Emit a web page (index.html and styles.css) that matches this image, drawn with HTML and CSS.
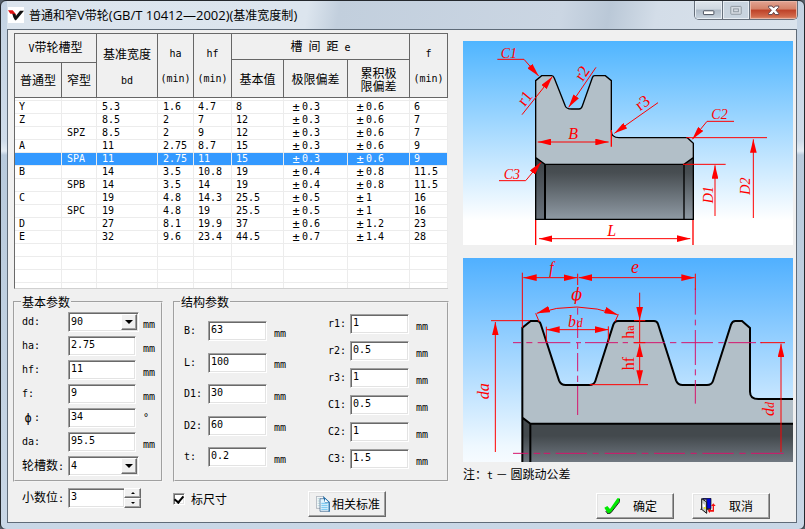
FILE: index.html
```html
<!DOCTYPE html>
<html lang="zh-CN">
<head>
<meta charset="utf-8">
<title>普通和窄V带轮(GB/T 10412—2002)(基准宽度制)</title>
<link rel="stylesheet" href="styles.css">
</head>
<body>
<div class="window">
  <header class="titlebar">
    <svg class="app-icon" viewBox="0 0 48 48" aria-hidden="true"><rect width="48" height="48" fill="#fff"/><path d="M0 10h14l10 12-5 8-6-10H7z" fill="#e01010"/><path d="M13 20h8l3 6L36 11h12L30 33l-6 7h-3l-5-9z" fill="#111"/></svg>
    <h1>普通和窄<span>V</span>带轮<span>(GB/T 10412—2002)(</span>基准宽度制<span>)</span></h1>
    <div class="caption-buttons">
      <button class="cap min" type="button" aria-label="最小化"><svg viewBox="0 0 84 57"><rect x="26" y="31" width="33" height="12" rx="2" fill="#fff" stroke="#454b59" stroke-width="3"/></svg></button>
      <button class="cap max" type="button" aria-label="最大化" disabled><svg viewBox="0 0 81 57"><rect x="24" y="17" width="33" height="25" rx="2" fill="#d5dbe2" stroke="#8d969f" stroke-width="3"/><rect x="33" y="25" width="15" height="9" fill="none" stroke="#8d969f" stroke-width="3"/></svg></button>
      <button class="cap close" type="button" aria-label="关闭"><svg viewBox="0 0 141 57"><path d="M55 16h11l5 6 5-6h11v4l-9 9 9 10v4H76l-5-7-5 7H55v-4l9-10-9-9z" fill="#fff" stroke="#5b3f48" stroke-width="3"/></svg></button>
    </div>
  </header>

  <main class="client">
    <section class="left">
      <div class="list">
        <table>
          <colgroup><col class="c1"><col class="c2"><col class="c3"><col class="c4"><col class="c5"><col class="c6"><col class="c7"><col class="c8"><col class="c9"></colgroup>
          <thead>
            <tr class="h1"><th colspan="2" rowspan="2"><span class="lat">V</span>带轮槽型</th><th rowspan="3" class="two">基准宽度<br><span class="lat">bd</span></th><th rowspan="3" class="two lat">ha<br>(min)</th><th rowspan="3" class="two lat">hf<br>(min)</th><th colspan="3">槽&ensp;间&ensp;距&ensp;<span class="lat">e</span></th><th rowspan="3" class="two lat">f<br>(min)</th></tr>
            <tr class="h2"><th rowspan="2">基本值</th><th rowspan="2">极限偏差</th><th rowspan="2" class="tight">累积极<br>限偏差</th></tr>
            <tr class="h3"><th>普通型</th><th>窄型</th></tr>
          </thead>
          <tbody>
            <tr class="pad"><td></td><td></td><td></td><td></td><td></td><td></td><td></td><td></td><td></td></tr>
            <tr><td>Y</td><td></td><td>5.3</td><td>1.6</td><td>4.7</td><td>8</td><td><i>±</i>0.3</td><td><i>±</i>0.6</td><td>6</td></tr>
            <tr><td>Z</td><td></td><td>8.5</td><td>2</td><td>7</td><td>12</td><td><i>±</i>0.3</td><td><i>±</i>0.6</td><td>7</td></tr>
            <tr><td></td><td>SPZ</td><td>8.5</td><td>2</td><td>9</td><td>12</td><td><i>±</i>0.3</td><td><i>±</i>0.6</td><td>7</td></tr>
            <tr><td>A</td><td></td><td>11</td><td>2.75</td><td>8.7</td><td>15</td><td><i>±</i>0.3</td><td><i>±</i>0.6</td><td>9</td></tr>
            <tr class="selected"><td></td><td>SPA</td><td>11</td><td>2.75</td><td>11</td><td>15</td><td><i>±</i>0.3</td><td><i>±</i>0.6</td><td>9</td></tr>
            <tr><td>B</td><td></td><td>14</td><td>3.5</td><td>10.8</td><td>19</td><td><i>±</i>0.4</td><td><i>±</i>0.8</td><td>11.5</td></tr>
            <tr><td></td><td>SPB</td><td>14</td><td>3.5</td><td>14</td><td>19</td><td><i>±</i>0.4</td><td><i>±</i>0.8</td><td>11.5</td></tr>
            <tr><td>C</td><td></td><td>19</td><td>4.8</td><td>14.3</td><td>25.5</td><td><i>±</i>0.5</td><td><i>±</i>1</td><td>16</td></tr>
            <tr><td></td><td>SPC</td><td>19</td><td>4.8</td><td>19</td><td>25.5</td><td><i>±</i>0.5</td><td><i>±</i>1</td><td>16</td></tr>
            <tr><td>D</td><td></td><td>27</td><td>8.1</td><td>19.9</td><td>37</td><td><i>±</i>0.6</td><td><i>±</i>1.2</td><td>23</td></tr>
            <tr><td>E</td><td></td><td>32</td><td>9.6</td><td>23.4</td><td>44.5</td><td><i>±</i>0.7</td><td><i>±</i>1.4</td><td>28</td></tr>
            <tr><td></td><td></td><td></td><td></td><td></td><td></td><td></td><td></td><td></td></tr>
            <tr><td></td><td></td><td></td><td></td><td></td><td></td><td></td><td></td><td></td></tr>
            <tr><td></td><td></td><td></td><td></td><td></td><td></td><td></td><td></td><td></td></tr>
            <tr class="last"><td></td><td></td><td></td><td></td><td></td><td></td><td></td><td></td><td></td></tr>
          </tbody>
        </table>
      </div>

      <div class="groups">
        <fieldset class="basic">
          <legend>基本参数</legend>
          <div class="field"><label for="dd">dd:</label><span class="combo"><select id="dd"><option>90</option></select><span class="arrow"></span></span><span class="unit">mm</span></div>
          <div class="field"><label for="ha">ha:</label><input id="ha" value="2.75"><span class="unit">mm</span></div>
          <div class="field"><label for="hf">hf:</label><input id="hf" value="11"><span class="unit">mm</span></div>
          <div class="field"><label for="f">f:</label><input id="f" value="9"><span class="unit">mm</span></div>
          <div class="field"><label for="phi"><i>ϕ</i>:</label><input id="phi" value="34"><span class="unit deg">°</span></div>
          <div class="field"><label for="da">da:</label><input id="da" value="95.5"><span class="unit">mm</span></div>
          <div class="field"><label for="slots"><span class="cjk">轮槽数</span>:</label><span class="combo"><select id="slots"><option>4</option></select><span class="arrow"></span></span></div>
        </fieldset>
        <fieldset class="struct">
          <legend>结构参数</legend>
          <div class="col a">
            <div class="field"><label for="B">B:</label><input id="B" value="63"><span class="unit">mm</span></div>
            <div class="field"><label for="L">L:</label><input id="L" value="100"><span class="unit">mm</span></div>
            <div class="field"><label for="D1">D1:</label><input id="D1" value="30"><span class="unit">mm</span></div>
            <div class="field"><label for="D2">D2:</label><input id="D2" value="60"><span class="unit">mm</span></div>
            <div class="field"><label for="t">t:</label><input id="t" value="0.2"><span class="unit">mm</span></div>
          </div>
          <div class="col b">
            <div class="field"><label for="r1">r1:</label><input id="r1" value="1"><span class="unit">mm</span></div>
            <div class="field"><label for="r2">r2:</label><input id="r2" value="0.5"><span class="unit">mm</span></div>
            <div class="field"><label for="r3">r3:</label><input id="r3" value="1"><span class="unit">mm</span></div>
            <div class="field"><label for="C1">C1:</label><input id="C1" value="0.5"><span class="unit">mm</span></div>
            <div class="field"><label for="C2">C2:</label><input id="C2" value="1"><span class="unit">mm</span></div>
            <div class="field"><label for="C3">C3:</label><input id="C3" value="1.5"><span class="unit">mm</span></div>
          </div>
        </fieldset>
      </div>

      <div class="footer">
        <div class="field digits"><label for="digits"><span class="cjk">小数位</span>:</label><input id="digits" value="3"><span class="spin"><button type="button" aria-label="增加"><span class="up"></span></button><button type="button" aria-label="减少"><span class="down"></span></button></span></div>
        <label class="check"><input type="checkbox" checked>标尺寸</label>
        <button class="btn std" type="button"><svg viewBox="0 0 42 48" aria-hidden="true"><path d="M1 1h22v36H1z" fill="#f4f7fa" stroke="#8c96a0" stroke-width="2"/><path d="M5 8h8M5 15h6M5 22h6M5 29h6" stroke="#9cc" stroke-width="2"/><path d="M12 8h17l11 11v27H12z" fill="#e2f3fd" stroke="#3a5f86" stroke-width="2"/><path d="M21 0l20 18v29h-3V20H27z" fill="#1769a8"/><path d="M27 8v11h11z" fill="#fff"/><path d="M16 22h19M16 28h19M16 34h19M16 40h19" stroke="#6fc3ef" stroke-width="3"/></svg>相关标准</button>
      </div>
    </section>

    <section class="right">
      <svg class="drawing" viewBox="24 123 990 612" role="img" aria-label="V带轮结构图">
        <defs>
          <linearGradient id="sky1" x1="0" y1="0" x2="0" y2="1"><stop offset="0" stop-color="#4fb5ff"/><stop offset=".88" stop-color="#fff"/></linearGradient>
          <linearGradient id="bore1" x1="0" y1="0" x2="0" y2="1"><stop offset="0" stop-color="#41464a"/><stop offset=".25" stop-color="#484e52"/><stop offset="1" stop-color="#8f9aa4"/></linearGradient>
          <linearGradient id="edge1" x1="0" y1="0" x2="0" y2="1"><stop offset="0" stop-color="#3a3f43"/><stop offset="1" stop-color="#69727c"/></linearGradient>
          <marker id="tip" viewBox="0 0 40 20" refX="40" refY="10" markerWidth="40" markerHeight="20" markerUnits="userSpaceOnUse" orient="auto-start-reverse"><path d="M0 0L40 10L0 20z" fill="#f00"/></marker>
        </defs>
        <path d="M24 123h990v612H24z" fill="url(#sky1)"/>
        <path d="M242 658V242L260 227H290Q295 227 298 235L330 316Q333 327 350 327H372Q379 327 382 318L412 233Q414 227 419 227H451L469 242V393Q469 413 492 413H697L715 430V658z" fill="#b2bfc8"/>
        <path d="M242 473L270 493H687L715 473V658H242z" fill="url(#bore1)"/>
        <path d="M242 473L270 493V658H242z" fill="url(#edge1)"/>
        <path d="M715 473L687 493V658H715z" fill="url(#bore1)"/>
        <path d="M242 658V242L260 227H290Q295 227 298 235L330 316Q333 327 350 327H372Q379 327 382 318L412 233Q414 227 419 227H451L469 242V393Q469 413 492 413H697L715 430V658zM242 473L270 493H687L715 473M687 493V658" fill="none" stroke="#000" stroke-width="4"/>
        <path d="M270 493V658" stroke="#000" stroke-width="6"/>
        <g fill="none" stroke="#f00" stroke-width="3">
          <path d="M127 178H207L251 228" marker-end="url(#tip)"/>
          <path d="M201 344L292 230" marker-end="url(#tip)"/>
          <path d="M423 202L341 322" marker-end="url(#tip)"/>
          <path d="M609 308L478 400" marker-end="url(#tip)"/>
          <path d="M837 364H756L712 418" marker-end="url(#tip)"/>
          <path d="M132 542H212L258 487" marker-end="url(#tip)"/>
          <path d="M248 426H461" marker-start="url(#tip)" marker-end="url(#tip)"/>
          <path d="M252 716H706" marker-start="url(#tip)" marker-end="url(#tip)"/>
          <path d="M780 648V496" marker-end="url(#tip)"/>
          <path d="M895 654V418" marker-end="url(#tip)"/>
          <path d="M469 390V440M242 660V735M714 660V735" stroke-width="4"/>
          <path d="M694 413H936M684 493H812"/>
        </g>
        <g class="dim">
          <text x="137" y="174">C1</text><text x="769" y="358">C2</text><text x="146" y="537">C3</text>
          <text class="big" x="340" y="416">B</text><text class="big" x="457" y="709">L</text>
          <text transform="translate(773 610) rotate(-90)">D1</text><text transform="translate(886 584) rotate(-90)">D2</text>
          <g class="radius"><text transform="translate(209 321) rotate(-51)">r1</text><text transform="translate(383 246) rotate(-55)">r2</text><text transform="translate(555 334) rotate(-36)">r3</text></g>
        </g>
      </svg>

      <svg class="drawing" viewBox="24 24 990 612" role="img" aria-label="轮槽尺寸图">
        <defs>
          <linearGradient id="sky2" x1="0" y1="0" x2="0" y2="1"><stop offset="0" stop-color="#50b0ff"/><stop offset=".92" stop-color="#eef8ff"/><stop offset="1" stop-color="#f6fbff"/></linearGradient>
          <linearGradient id="bore2" x1="0" y1="0" x2="0" y2="1"><stop offset="0" stop-color="#43494d"/><stop offset=".4" stop-color="#43494d"/><stop offset="1" stop-color="#727a83"/></linearGradient>
        </defs>
        <path d="M24 24h990v612H24z" fill="url(#sky2)"/>
        <path d="M202 640V233L227 213H246Q254 213 257 222L312 391Q317 405 332 405H403Q417 405 421 393L475 224Q479 213 489 213H597Q606 213 609 222L663 391Q668 405 683 405H756Q770 405 774 393L828 224Q832 213 841 213H861L885 234V425Q885 447 910 447H1020V640z" fill="#b2bfc8"/>
        <path d="M202 503L228 521H1020V640H202z" fill="url(#bore2)"/>
        <path d="M202 640V233L227 213H246Q254 213 257 222L312 391Q317 405 332 405H403Q417 405 421 393L475 224Q479 213 489 213H597Q606 213 609 222L663 391Q668 405 683 405H756Q770 405 774 393L828 224Q832 213 841 213H861L885 234V425Q885 447 910 447H1020M202 503L226 521V640M226 521H1020" fill="none" stroke="#000" stroke-width="6"/>
        <g fill="none" stroke="#d5156c" stroke-width="3">
          <path d="M174 278H198M214 278H232M248 278H346M363 278H378M390 278H489M503 278H519M535 278H630M645 278H664M679 278H774M790 278H806M820 278H903M915 278H920"/>
          <path d="M174 610H220M236 610H256M266 610H286M302 610H396M413 610H431M449 610H544M560 610H580M597 610H690M707 610H725M742 610H836M853 610H872M888 610H986"/>
          <path d="M368 174V194M368 210V264M368 278V297M368 309V364M368 377V396M368 408V495"/>
          <path d="M721 115V194M721 209V226M721 240V345M721 358V376M721 390V461"/>
        </g>
        <g fill="none" stroke="#f00" stroke-width="3">
          <path d="M202 68V233M368 71V105M721 71V120"/>
          <path d="M205 83H366" marker-start="url(#tip)" marker-end="url(#tip)"/>
          <path d="M371 83H719" marker-start="url(#tip)" marker-end="url(#tip)"/>
          <path d="M245 190Q365 150 488 194" marker-start="url(#tip)" marker-end="url(#tip)"/>
          <path d="M274 239H460" marker-start="url(#tip)" marker-end="url(#tip)"/>
          <path d="M242 190L253 216M490 193L480 215M274 230V277M460 229V275"/>
          <path d="M108 212H225M537 212H571M537 278H571M404 404H579M918 278H990"/>
          <path d="M121 606V216" marker-end="url(#tip)"/>
          <path d="M978 606V281" marker-end="url(#tip)"/>
          <path d="M554 128V211" marker-end="url(#tip)"/>
          <path d="M554 212V278"/>
          <path d="M554 281V401" marker-start="url(#tip)" marker-end="url(#tip)"/>
        </g>
        <g class="dim">
          <text class="big" x="283" y="68">f</text><text class="huge" x="528" y="69">e</text>
          <text class="phi" x="349" y="149">ϕ</text>
          <text class="big" x="339" y="231">b<tspan class="small" dx="2">d</tspan></text>
          <text class="big" transform="translate(101 448) rotate(-90)">da</text>
          <text class="big" transform="translate(957 498) rotate(-90)">d<tspan class="small">d</tspan></text>
          <text class="big upright" transform="translate(537 266) rotate(-90)">h<tspan class="small">a</tspan></text>
          <text class="big upright" transform="translate(536 361) rotate(-90)">hf</text>
        </g>
      </svg>
      <p class="note">注：<span class="lat">t</span> － 圆跳动公差</p>
      <div class="actions">
        <button class="btn" type="button"><svg viewBox="0 0 48 48" aria-hidden="true"><path d="M1 29l9-5 8 9L40 1h7v9L21 44l-9 4z" fill="#00e800"/><path d="M47 3v8L21 44l-9 4-7-9" fill="none" stroke="#222" stroke-width="3"/></svg><span>确定</span></button>
        <button class="btn" type="button"><svg viewBox="0 0 48 48" aria-hidden="true"><path d="M8 1h25v31H20V4H8z" fill="#0008e0" stroke="#000" stroke-width="2"/><path d="M5 2l15 10v34L5 34z" fill="#c4c8c8" stroke="#111" stroke-width="3"/><path d="M8 16l7 5v10l-7-5z" fill="#fff"/><path d="M12 27h5v5h-5z" fill="#ee0"/><path d="M1 34h5M21 34h12" stroke="#222" stroke-width="3"/><path d="M30 32l-7 6 7 7v-4h12V24h5l-7-8-7 8h5v12h-8z" fill="#f01010"/></svg><span>取消</span></button>
      </div>
    </section>
  </main>
</div>
</body>
</html>
```
FILE: styles.css
```css
* { box-sizing: border-box; }

body {
  margin: 0;
  background: #56606a;
  color: #000;
  font: 12px/12px "Noto Sans CJK SC", sans-serif;
}

button, input, select { font: inherit; color: inherit; margin: 0; }

.lat, .field, td {
  font-family: "DejaVu Sans Mono", "Noto Sans CJK SC", monospace;
  font-size: 10px;
}

.cjk { font: 12px/12px "Noto Sans CJK SC", sans-serif; }

.window {
  display: flex;
  flex-direction: column;
  min-height: 100vh;
  padding: 0 7px 6px 6px;
  border: 1px solid #24282d;
  border-radius: 6px;
  background: linear-gradient(#c3d2e2 0, #cfdcea 140px, #e3ebf3 150px, #b8cadc 154px, #c9d7e6 100%);
}

.titlebar {
  display: flex;
  align-items: flex-start;
  height: 28px;
  background: linear-gradient(100deg, #dbe4ed 0, #dce5ee 38%, #c2cfdd 42%, #cbd6e3 70%, #bac8d7 76%, #d3dde8 82%, #dae3ec 100%);
}

.app-icon { width: 16px; height: 16px; margin: 6px 5px 0 1px; }

.titlebar h1 {
  flex: 1;
  margin: 6px 0 0;
  font: 12px/16px "Open Sans", "Noto Sans CJK SC", sans-serif;
}
.titlebar h1 span { font-size: 13px; }

.caption-buttons {
  display: flex;
  margin-right: -1px;
  border: 1px solid #666f7b;
  border-top: 0;
  border-radius: 0 0 5px 5px;
  overflow: hidden;
}

.cap {
  width: 28px;
  height: 18px;
  padding: 0;
  border: 0;
  border-right: 1px solid #66707c;
  background: linear-gradient(#dfe6ed 0, #ced7e0 45%, #adb9c6 50%, #c9d4df 100%);
  box-shadow: inset 0 0 0 1px #e8eef4;
}
.cap svg { display: block; width: 100%; height: 18px; }
.cap.max { width: 27px; background: #c9d4df; }
.cap.close {
  width: 47px;
  border-right: 0;
  background: linear-gradient(#e2a493 0, #d48168 45%, #bd4128 50%, #d1684a 85%, #dd9275 100%);
  box-shadow: inset 0 0 0 1px #e9b5a5;
}

.client {
  flex: 1;
  display: grid;
  grid-template-columns: minmax(0, 436fr) minmax(0, 330fr);
  gap: 14px;
  padding: 3px 3px 3px 5px;
  border: 1px solid #5f6b78;
  background: #f0f0f0;
}

/* data list */
.list {
  height: 256px;
  margin: 0 1px;
  overflow: hidden;
  border: 1px solid #696969;
  border-right: 0;
  border-bottom-color: #d0d0d0;
  background: #fff;
}

table { width: 100%; table-layout: fixed; border-spacing: 0; }
.c1 { width: 47px; }
.c2 { width: 35px; }
.c3 { width: 61px; }
.c4 { width: 36px; }
.c5 { width: 38px; }
.c6 { width: 52px; }
.c7 { width: 64px; }
.c8 { width: 62px; }
.c9 { width: 38px; }

th {
  padding: 0;
  border-right: 1px solid #666;
  border-bottom: 1px solid #666;
  background: #f0f0f0;
  font-weight: normal;
  line-height: 12px;
  white-space: nowrap;
}
.h1 { height: 26px; }
.h2 { height: 3px; }
.h3 { height: 35px; }
th.two { line-height: 25px; }
th.tight { line-height: 13px; }
.two .lat { line-height: 12px; }

td {
  height: 13px;
  padding: 0 0 0 4px;
  border-right: 1px solid #ececec;
  border-bottom: 1px solid #ececec;
  line-height: 12px;
  white-space: nowrap;
}
.pad td { height: 3px; }
.last td { height: 20px; }
td:nth-child(2), td:nth-child(3), td:nth-child(4) { padding-left: 5px; }
td:nth-child(7), td:nth-child(8) { padding-left: 6px; }
.selected td { background: #3399ff; color: #fff; }

i {
  display: inline-block;
  width: 12px;
  height: 12px;
  vertical-align: top;
  font-style: normal;
  font-size: 12px;
  line-height: 12px;
  text-align: center;
}

/* parameter groups */
.groups { display: grid; grid-template-columns: 150fr 276fr; gap: 10px; margin-top: 7px; }

fieldset {
  display: flex;
  min-width: 0;
  height: 186px;
  margin: 0;
  border: 2px groove #f4f4f4;
}
fieldset.basic { flex-direction: column; gap: 4px; padding: 4px 3px 4px 7px; }
fieldset.struct { padding: 0 19px 0 9px; justify-content: space-between; }
legend { margin-left: -1px; padding: 0 1px; }
.struct legend { margin-left: -4px; }

.col { display: flex; flex-direction: column; justify-content: space-between; }
.col.a { padding: 13px 0; }
.col.b { padding: 6px 0 11px; }

.field { display: flex; align-items: center; height: 20px; line-height: 12px; }
.field > label { width: 46px; white-space: nowrap; }
.col.a label { width: 24px; }
.col.b label { width: 22px; }

.field > input, .combo {
  width: 68px;
  height: 20px;
  padding: 0 0 3px 2px;
  border: 1px solid;
  border-color: #a0a0a0 #fff #fff #a0a0a0;
  border-radius: 0;
  background: #fff;
  box-shadow: inset 1px 1px #696969, inset -1px -1px #e3e3e3;
}
.col .field > input { width: 59px; }
.unit { margin-left: 7px; padding-top: 5px; }
.deg { padding: 0; }

.basic .combo { position: relative; display: block; width: 71px; padding: 1px; }
.combo + .unit { margin-left: 4px; }
.combo select {
  display: block;
  width: 100%;
  height: 16px;
  padding: 0 0 0 1px;
  border: 0;
  background: transparent;
  appearance: none;
}
.arrow {
  position: absolute;
  top: 1px;
  right: 1px;
  width: 16px;
  height: 16px;
  border: 1px solid;
  border-color: #fff #696969 #696969 #fff;
  background: #f0f0f0;
  box-shadow: inset -1px -1px #a0a0a0;
  pointer-events: none;
}
.arrow::after, .up, .down {
  content: "";
  display: block;
  width: 0;
  margin: 5px auto 0;
  border: 4px solid transparent;
  border-top-color: #000;
  border-bottom: 0;
}

.footer { display: flex; align-items: flex-start; margin-top: 6px; }
.digits { width: 160px; padding-left: 9px; }
.digits > input { width: 56px; border-right: 0; }
.spin { display: flex; flex-direction: column; }
.spin button {
  width: 17px;
  height: 10px;
  padding: 0;
  border: 1px solid;
  border-color: #fff #696969 #696969 #fff;
  background: #f0f0f0;
  box-shadow: inset -1px -1px #a0a0a0;
}
.up, .down { margin: 0 auto; border-width: 2px; border-bottom: 0; }
.up { border: 2px solid transparent; border-top: 0; border-bottom-color: #000; }

.check { display: flex; align-items: center; gap: 6px; width: 135px; margin-top: 5px; }
.check input {
  appearance: none;
  display: grid;
  place-items: center;
  width: 12px;
  height: 12px;
  border: 1px solid;
  border-color: #a0a0a0 #fff #fff #a0a0a0;
  background: #fff;
  box-shadow: inset 1px 1px #696969, inset -1px -1px #e3e3e3;
}
.check input:checked::after {
  content: "";
  width: 4px;
  height: 7px;
  margin-bottom: 2px;
  border: solid #000;
  border-width: 0 2px 2px 0;
  transform: rotate(40deg);
}

.btn {
  display: flex;
  align-items: center;
  width: 78px;
  height: 26px;
  padding: 0 0 0 7px;
  border: 1px solid;
  border-color: #fff #696969 #696969 #fff;
  background: #f0f0f0;
  box-shadow: inset -1px -1px #a0a0a0, inset 1px 1px #e3e3e3;
  white-space: nowrap;
}
.btn svg { width: 16px; height: 16px; }
.btn span { margin-left: 13px; }
.btn.std { margin-top: 3px; gap: 2px; }
.std svg { width: 14px; }

/* drawings */
.right { padding-top: 8px; }
.drawing { display: block; width: 100%; }
.drawing + .drawing { margin-top: 13px; }

.dim { fill: #f00; font: italic 42px "Liberation Serif", serif; }
.big { font-size: 48px; }
.huge { font-size: 54px; }
.small { font-size: 36px; }
.upright { font-style: normal; }
.phi { font: italic 48px "DejaVu Serif", serif; }
.radius { font: 50px "Liberation Serif", serif; }

.note { margin: 6px 0 0; }
.actions { display: flex; justify-content: flex-end; gap: 18px; margin: 11px 23px 0 0; }
```
